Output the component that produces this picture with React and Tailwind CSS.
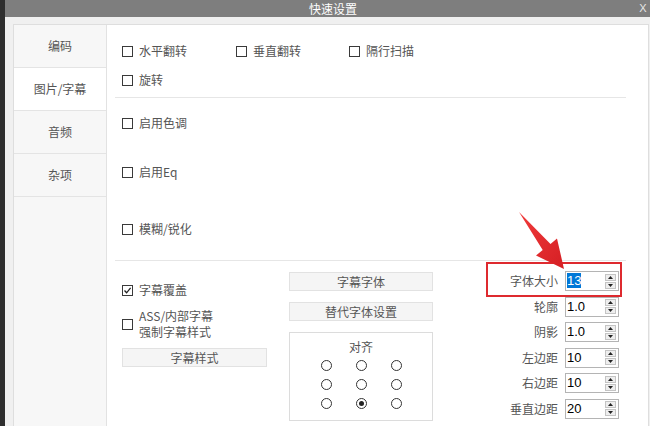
import React from "react";

const cjk = "font-['Noto_Sans_CJK_SC','Microsoft_YaHei',sans-serif]";

const CheckBox = ({ checked }) => (
  <span className="w-[11px] h-[11px] border border-[#3a3a3a] bg-white flex items-center justify-center shrink-0">
    {checked && (
      <svg width="9" height="9" viewBox="0 0 9 9">
        <path d="M1.5 4.5 L3.6 6.8 L7.6 1.8" fill="none" stroke="#222" strokeWidth="1.3" />
      </svg>
    )}
  </span>
);

const CheckRow = ({ label, checked, className = "" }) => (
  <div className={`flex items-center gap-[6px] h-[16px] ${className}`}>
    <CheckBox checked={checked} />
    <span className="text-[12px] leading-[16px] text-[#555]">{label}</span>
  </div>
);

const Radio = ({ checked }) => (
  <span className="w-[11px] h-[11px] rounded-full border border-[#333] bg-white flex items-center justify-center">
    {checked && <span className="w-[5px] h-[5px] rounded-full bg-[#222]" />}
  </span>
);

const Button = ({ children, className = "" }) => (
  <div
    className={`h-[19px] bg-[#f5f5f5] border border-[#e2e2e2] flex items-center justify-center text-[12px] text-[#555] ${className}`}
  >
    {children}
  </div>
);

const Spin = ({ value, selected }) => (
  <div className="w-[54px] h-[20px] border border-[#b4b4b4] bg-white flex items-center">
    <div className="flex-1 pl-[1px] font-['Liberation_Sans',Arial,sans-serif] text-[13px] text-black leading-[14px]">
      {selected ? <span className="bg-[#0078d7] text-white">{value}</span> : value}
    </div>
    <div className="w-[11px] mr-[2px] flex flex-col gap-[1px]">
      <span className="h-[7px] bg-[#eeeeee] border border-[#c4c4c4] flex items-center justify-center">
        <svg width="5" height="3" viewBox="0 0 5 3">
          <path d="M0 3 L2.5 0 L5 3 Z" fill="#222" />
        </svg>
      </span>
      <span className="h-[7px] bg-[#eeeeee] border border-[#c4c4c4] flex items-center justify-center">
        <svg width="5" height="3" viewBox="0 0 5 3">
          <path d="M0 0 L2.5 3 L5 0 Z" fill="#222" />
        </svg>
      </span>
    </div>
  </div>
);

const tabs = ["编码", "图片/字幕", "音频", "杂项"];

const spins = [
  { label: "字体大小", value: "13", selected: true },
  { label: "轮廓", value: "1.0" },
  { label: "阴影", value: "1.0" },
  { label: "左边距", value: "10" },
  { label: "右边距", value: "10" },
  { label: "垂直边距", value: "20" },
];

export default function App() {
  return (
    <div className={`relative w-[650px] h-[426px] flex overflow-hidden ${cjk}`}>
      {/* dark strip of the desktop behind */}
      <div className="w-[5px] bg-[#2e2e2e]" />

      <div className="flex-1 flex flex-col">
        {/* title bar */}
        <div className="h-[17px] bg-[#7e7e7e] flex items-center text-white">
          <span className="flex-1 text-center pl-[25px] text-[12px] leading-[17px]">快速设置</span>
          <span className="w-[14px] text-center font-['Liberation_Sans',Arial,sans-serif] text-[11px] text-[#e6e6e6]">
            X
          </span>
        </div>

        {/* body */}
        <div className="flex-1 bg-[#f0f0f0] pt-[7px] pl-[8px] pr-[1px] overflow-hidden">
          <div className="h-full flex bg-white border-l border-t border-r border-[#dedede]">
            {/* sidebar */}
            <div className="w-[93px] bg-[#f7f7f7] border-r border-[#e2e2e2] flex flex-col">
              {tabs.map((t, i) => (
                <div
                  key={t}
                  className={`h-[43px] border-b border-[#e4e4e4] flex items-center justify-center text-[12px] text-[#555] ${
                    i === 1 ? "bg-white" : ""
                  }`}
                >
                  {t}
                </div>
              ))}
            </div>

            {/* main */}
            <div className="flex-1 pl-[8px] flex flex-col">
              {/* section 1 */}
              <div className="pl-[7px] pt-[18px]">
                <div className="flex">
                  <CheckRow label="水平翻转" className="w-[114px]" />
                  <CheckRow label="垂直翻转" className="w-[113px]" />
                  <CheckRow label="隔行扫描" />
                </div>
                <CheckRow label="旋转" className="mt-[13px]" />
              </div>
              <div className="mt-[9px] h-px w-[511px] bg-[#e6e6e6]" />

              {/* section 2 */}
              <div className="pl-[7px]">
                <CheckRow label="启用色调" className="mt-[17px]" />
                <CheckRow label="启用Eq" className="mt-[33px]" />
                <CheckRow label="模糊/锐化" className="mt-[41px]" />
              </div>
              <div className="mt-[23px] h-px w-[511px] bg-[#e6e6e6]" />

              {/* section 3 */}
              <div className="pl-[7px] flex">
                <div className="w-[145px] flex flex-col">
                  <CheckRow label="字幕覆盖" checked className="mt-[21px]" />
                  <div className="mt-[10px] flex items-center gap-[6px]">
                    <CheckBox />
                    <span className="text-[12px] leading-[16px] text-[#555]">
                      ASS/内部字幕
                      <br />
                      强制字幕样式
                    </span>
                  </div>
                  <Button className="mt-[8px]">字幕样式</Button>
                </div>

                <div className="ml-[22px] w-[144px] flex flex-col">
                  <Button className="mt-[11px]">字幕字体</Button>
                  <Button className="mt-[11px]">替代字体设置</Button>
                  <div className="mt-[11px] h-[89px] border border-[#dcdcdc] pt-[6px] flex flex-col items-center">
                    <span className="text-[12px] leading-[16px] text-[#555]">对齐</span>
                    <div className="mt-[5px] grid grid-cols-3 gap-x-[24px] gap-y-[8px]">
                      {Array.from({ length: 9 }).map((_, i) => (
                        <Radio key={i} checked={i === 7} />
                      ))}
                    </div>
                  </div>
                </div>

                <div className="relative ml-[53px] w-[133px] pt-[10px] flex flex-col gap-[5.6px]">
                  <div className="absolute left-0 top-[1px] w-[136px] h-[35px] border-2 border-[#de2a2f]" />
                  {spins.map((s) => (
                    <div key={s.label} className="h-[20px] flex items-center justify-end gap-[7px]">
                      <span className="text-[12px] text-[#555] leading-[16px]">{s.label}</span>
                      <Spin value={s.value} selected={s.selected} />
                    </div>
                  ))}
                </div>
              </div>
            </div>
          </div>
        </div>
      </div>

      {/* annotation arrow */}
      <svg
        className="absolute inset-0 pointer-events-none"
        width="650"
        height="426"
        viewBox="0 0 650 426"
      >
        <defs>
          <linearGradient id="ar" x1="0" y1="0" x2="1" y2="1">
            <stop offset="0" stopColor="#f03a3a" />
            <stop offset="1" stopColor="#d51f24" />
          </linearGradient>
        </defs>
        <polygon
          points="519,212 550.5,243.9 557,238.5 564,269 536,255.5 542.7,250.1"
          fill="url(#ar)"
        />
      </svg>
    </div>
  );
}
